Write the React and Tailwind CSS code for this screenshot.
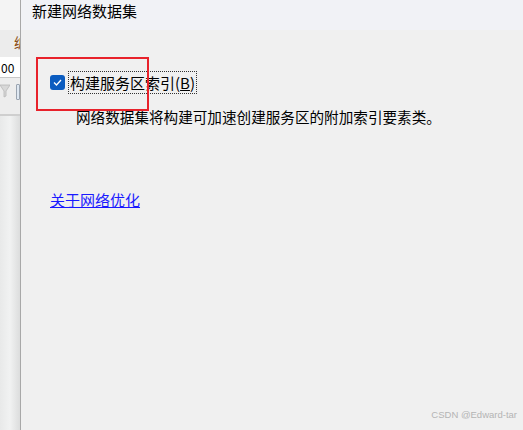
import React from 'react';

const font = { fontFamily: '"Noto Sans CJK SC", "Noto Sans", sans-serif' };

function LeftStrip() {
    return (
        <div className="w-[20px] h-full flex flex-col shrink-0 overflow-hidden">
            <div className="h-[30px] bg-[#f4f4f4]" />
            <div className="h-[27px] bg-[#ececec] relative">
                <span className="absolute left-[14px] top-[5px] text-[14px] leading-none text-[#8a4a10]">编</span>
            </div>
            <div className="h-[21px] bg-white border-b border-[#c8c8c8] text-[12px] leading-[21px] text-black pl-[1px]" style={font}>
                00
            </div>
            <div className="h-[38px] bg-[#ededed] border-b-2 border-[#cfcfcf] flex items-start gap-[6px] pt-[6px]">
                <svg width="10" height="14" viewBox="0 0 10 14" className="shrink-0">
                    <path d="M0 1 L10 1 L6 7 L6 12 L4 13 L4 7 Z" fill="#d8d8d8" stroke="#b8b8b8" strokeWidth="0.8" />
                </svg>
                <div className="w-[6px] h-[16px] border border-[#9aa4b0] bg-[#dfe8f2] rounded-[1px]" />
            </div>
            <div className="flex-1 bg-gradient-to-r from-[#e8e9e9] via-[#f1f2f2] to-[#dcdddd]" />
        </div>
    );
}

export default function App() {
    return (
        <div className="w-[523px] h-[430px] flex bg-[#f0f0f0] overflow-hidden" style={font}>
            <LeftStrip />
            <div className="flex-1 flex flex-col border-l border-[#a8a8a8]">
                <div className="h-[30px] bg-[#f1f2f6] px-[11px] text-[15px] leading-[22px] text-black">
                    新建网络数据集
                </div>
                <div className="flex-1 bg-[#f0f0f0] relative pl-[29px] pt-[41px]">
                    {/* annotation box */}
                    <div className="absolute left-[15px] top-[27px] w-[113px] h-[54px] border-2 border-[#e8222b]" />
                    <div className="flex items-center">
                        <div className="w-[15px] h-[15px] rounded-[3px] bg-[#0b5cc0] flex items-center justify-center mr-[3px]">
                            <svg width="9" height="7" viewBox="0 0 9 7">
                                <path d="M1 3.5 L3.5 6 L8 1" fill="none" stroke="white" strokeWidth="1.3" />
                            </svg>
                        </div>
                        <div className="h-[23px] border border-dotted border-[#333] px-[1px] text-[15px] leading-[21px] text-black">
                            构建服务区索引(<span className="underline">B</span>)
                        </div>
                    </div>
                    <div className="ml-[26px] mt-[13px] text-[14.6px] leading-[20px] text-black">
                        网络数据集将构建可加速创建服务区的附加索引要素类。
                    </div>
                    <div className="mt-[60px]">
                        <a href="#" className="text-[15px] leading-[20px] text-[#1a1aff] underline">关于网络优化</a>
                    </div>
                    <div className="absolute right-[6px] bottom-[8px] text-[9.5px] text-[#b4b4b4]" style={{ fontFamily: '"Liberation Sans", sans-serif' }}>
                        CSDN @Edward-tar
                    </div>
                </div>
            </div>
        </div>
    );
}
